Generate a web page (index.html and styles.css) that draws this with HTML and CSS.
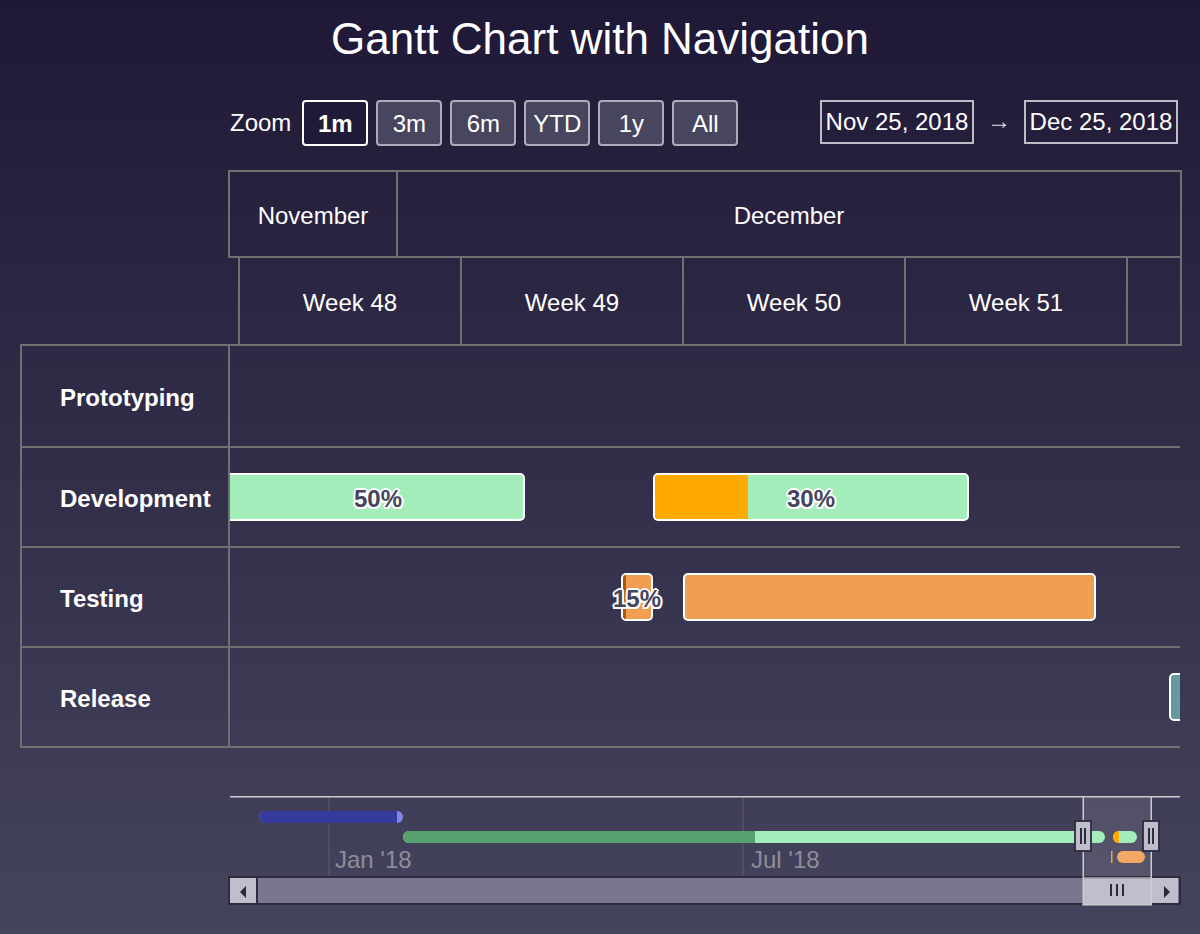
FILE: index.html
```html
<!DOCTYPE html>
<html lang="en">
<head>
<meta charset="utf-8">
<title>Gantt Chart with Navigation</title>
<link rel="stylesheet" href="styles.css">
</head>
<body>
<div class="page">
  <h1 class="title">Gantt Chart with Navigation</h1>

  <div class="toolbar">
    <div class="zoom">
      <span class="zoom-label">Zoom</span>
      <button class="zbtn active">1m</button>
      <button class="zbtn">3m</button>
      <button class="zbtn">6m</button>
      <button class="zbtn">YTD</button>
      <button class="zbtn">1y</button>
      <button class="zbtn">All</button>
    </div>
    <div class="range">
      <span class="date">Nov 25, 2018</span>
      <span class="arrow">→</span>
      <span class="date">Dec 25, 2018</span>
    </div>
  </div>

  <div class="head">
    <div class="months">
      <div class="month m-nov">November</div>
      <div class="month m-dec">December</div>
    </div>
    <div class="weeks">
      <div class="week">Week 48</div>
      <div class="week">Week 49</div>
      <div class="week">Week 50</div>
      <div class="week">Week 51</div>
      <div class="week week-part"></div>
    </div>
  </div>

  <div class="grid">
    <div class="row row-first">
      <div class="label">Prototyping</div>
      <div class="track"></div>
    </div>
    <div class="row">
      <div class="label">Development</div>
      <div class="track">
        <div class="bar bar-green" style="left:-20px;width:315px"></div>
        <div class="dl" style="left:148px">50%</div>
        <div class="bar bar-green" style="left:423px;width:316px">
          <div class="fill fill-amber" style="width:93px"></div>
        </div>
        <div class="dl" style="left:581px">30%</div>
      </div>
    </div>
    <div class="row">
      <div class="label">Testing</div>
      <div class="track">
        <div class="bar bar-orange" style="left:391px;width:32px">
          <div class="fill fill-dark" style="width:3px"></div>
        </div>
        <div class="dl" style="left:407px">15%</div>
        <div class="bar bar-orange" style="left:453px;width:413px"></div>
      </div>
    </div>
    <div class="row">
      <div class="label">Release</div>
      <div class="track">
        <div class="bar bar-teal" style="left:939px;width:40px"></div>
      </div>
    </div>
  </div>

  <svg class="navigator" width="1200" height="139" viewBox="0 795 1200 139" xmlns="http://www.w3.org/2000/svg">
    <defs>
      <clipPath id="pill1"><rect x="259" y="811" width="144" height="12" rx="6"/></clipPath>
      <clipPath id="pill2"><rect x="403" y="831" width="702" height="12" rx="6"/></clipPath>
      <clipPath id="pill3"><rect x="1113" y="831" width="24" height="12" rx="6"/></clipPath>
    </defs>
    <rect x="1083" y="797" width="68" height="80" fill="rgba(255,255,255,0.1)"/>
    <line x1="329" y1="797" x2="329" y2="877" stroke="#55545f" stroke-width="1.5"/>
    <line x1="743" y1="797" x2="743" y2="877" stroke="#55545f" stroke-width="1.5"/>
    <text class="nav-label" x="335" y="868">Jan '18</text>
    <text class="nav-label" x="751" y="868">Jul '18</text>

    <g clip-path="url(#pill1)">
      <rect x="259" y="811" width="144" height="12" fill="#8087e8"/>
      <rect x="259" y="811" width="138" height="12" fill="#343b9f"/>
    </g>
    <g clip-path="url(#pill2)">
      <rect x="403" y="831" width="702" height="12" fill="#a3edba"/>
      <rect x="403" y="831" width="352" height="12" fill="#56a16e"/>
    </g>
    <g clip-path="url(#pill3)">
      <rect x="1113" y="831" width="24" height="12" fill="#a3edba"/>
      <rect x="1113" y="831" width="6" height="12" fill="#ffaa00"/>
    </g>
    <rect x="1111" y="851" width="1.5" height="12" fill="#f19e53"/>
    <rect x="1117" y="851" width="28" height="12" rx="6" fill="#f4a866"/>

    <rect x="230" y="796" width="950" height="1.5" fill="#cccccc"/>

    <rect x="229" y="877" width="951" height="27" fill="#7a768f" stroke="#2d2b3c" stroke-width="2"/>
    <rect x="230" y="878" width="26" height="25" fill="#bfbecc"/>
    <rect x="256" y="878" width="2" height="25" fill="#2d2b3c"/>
    <path d="M246 886 L240 892 L246 898 Z" fill="#2b2939"/>
    <rect x="1152" y="878" width="26" height="25" fill="#bfbecc"/>
    <path d="M1164 886 L1170 892 L1164 898 Z" fill="#2b2939"/>

    <rect x="1083" y="877" width="68" height="27" fill="#bfbecc"/>
    <rect x="1083" y="877" width="68" height="1.5" fill="#8a8996"/>
    <rect x="1110" y="884" width="2" height="12" fill="#2d2b3c"/>
    <rect x="1116" y="884" width="2" height="12" fill="#2d2b3c"/>
    <rect x="1122" y="884" width="2" height="12" fill="#2d2b3c"/>

    <rect x="1082.5" y="797" width="1.5" height="108" fill="#cccccc"/>
    <rect x="1150.5" y="797" width="1.5" height="108" fill="#cccccc"/>
    <rect x="1082.5" y="904" width="69.5" height="1.5" fill="#cccccc"/>

    <rect x="1075" y="821" width="16" height="30" fill="#bfbecc" stroke="#2d2b3c" stroke-width="1.8"/>
    <rect x="1080" y="828" width="2" height="16" fill="#2d2b3c"/>
    <rect x="1084" y="828" width="2" height="16" fill="#2d2b3c"/>
    <rect x="1143" y="821" width="16" height="30" fill="#bfbecc" stroke="#2d2b3c" stroke-width="1.8"/>
    <rect x="1148" y="828" width="2" height="16" fill="#2d2b3c"/>
    <rect x="1152" y="828" width="2" height="16" fill="#2d2b3c"/>
  </svg>
</div>
</body>
</html>
```

FILE: styles.css
```css
* {
  box-sizing: border-box;
}

html,
body {
  margin: 0;
  padding: 0;
}

body {
  font-family: "Liberation Sans", Arial, sans-serif;
  color: #ffffff;
}

.page {
  width: 1200px;
  height: 934px;
  overflow: hidden;
  background: linear-gradient(180deg, #1f1836 0%, #45445d 100%);
}

.title {
  margin: 0;
  padding-top: 14px;
  font-size: 44px;
  line-height: 50px;
  font-weight: normal;
  text-align: center;
  color: #ffffff;
}

/* toolbar */
.toolbar {
  display: flex;
  justify-content: space-between;
  align-items: flex-start;
  height: 46px;
  margin-top: 36px;
  padding: 0 22px 0 230px;
}

.zoom {
  display: flex;
  align-items: center;
  gap: 8px;
  height: 46px;
}

.zoom-label {
  font-size: 24px;
  margin-right: 3px;
}

.zbtn {
  width: 66px;
  height: 46px;
  padding: 2px 0 0;
  border: 2px solid #acabb7;
  border-radius: 4px;
  background: #47465e;
  color: #ffffff;
  font: 24px "Liberation Sans", Arial, sans-serif;
  display: flex;
  align-items: center;
  justify-content: center;
}

.zbtn.active {
  border-color: #ffffff;
  background: #1f1a38;
  font-weight: bold;
}

.range {
  display: flex;
  align-items: center;
  height: 44px;
}

.date {
  width: 154px;
  height: 44px;
  border: 2px solid #bcbbc6;
  font-size: 24px;
  display: flex;
  align-items: center;
  justify-content: center;
}

.arrow {
  width: 50px;
  padding-bottom: 2px;
  text-align: center;
  font-size: 24px;
  color: #d8d8e0;
}

/* header */
.head {
  margin-top: 24px;
  margin-left: 228px;
  width: 954px;
}

.months {
  display: flex;
  height: 88px;
  border: 2px solid #707070;
}

.month {
  display: flex;
  align-items: center;
  justify-content: center;
  padding-top: 4px;
  font-size: 24px;
}

.m-nov {
  width: 168px;
  border-right: 2px solid #707070;
}

.m-dec {
  flex: 1;
}

.weeks {
  display: flex;
  height: 88px;
  margin-left: 10px;
  border: 2px solid #707070;
  border-top: 0;
}

.week {
  width: 222px;
  padding-top: 4px;
  border-right: 2px solid #707070;
  display: flex;
  align-items: center;
  justify-content: center;
  font-size: 24px;
}

.week-part {
  flex: 1;
  border-right: 0;
}

/* body grid */
.grid {
  width: 1160px;
  margin-left: 20px;
  margin-top: -2px;
  border-top: 2px solid #707070;
  border-left: 2px solid #707070;
}

.row {
  display: flex;
  height: 100px;
  border-bottom: 2px solid #707070;
}

.row-first {
  height: 102px;
}

.label {
  width: 208px;
  padding: 3px 0 0 38px;
  border-right: 2px solid #707070;
  display: flex;
  align-items: center;
  font-size: 24px;
  font-weight: bold;
}

.track {
  position: relative;
  flex: 1;
  overflow: hidden;
}

.bar {
  position: absolute;
  top: 25px;
  height: 48px;
  border: 2px solid #ffffff;
  border-radius: 5px;
  overflow: hidden;
}

.bar-green {
  background: #a3edba;
}

.bar-orange {
  background: #f19e53;
}

.bar-teal {
  background: #6699a1;
}

.fill {
  position: absolute;
  left: 0;
  top: 0;
  bottom: 0;
}

.fill-amber {
  background: #ffaa00;
}

.fill-dark {
  background: #ad5608;
}

.dl {
  position: absolute;
  top: 0;
  height: 100%;
  padding-top: 4px;
  display: flex;
  align-items: center;
  transform: translateX(-50%);
  font-size: 24px;
  font-weight: bold;
  color: #46455e;
  white-space: nowrap;
  z-index: 2;
  text-shadow:
    2px 0 0 #fff, -2px 0 0 #fff, 0 2px 0 #fff, 0 -2px 0 #fff,
    1.5px 1.5px 0 #fff, -1.5px -1.5px 0 #fff, 1.5px -1.5px 0 #fff, -1.5px 1.5px 0 #fff,
    1px 0 0 #fff, -1px 0 0 #fff, 0 1px 0 #fff, 0 -1px 0 #fff;
}

/* navigator */
.navigator {
  display: block;
  margin-top: 47px;
}

.nav-label {
  font-family: "Liberation Sans", Arial, sans-serif;
  font-size: 24px;
  fill: #8f8d99;
}
```
